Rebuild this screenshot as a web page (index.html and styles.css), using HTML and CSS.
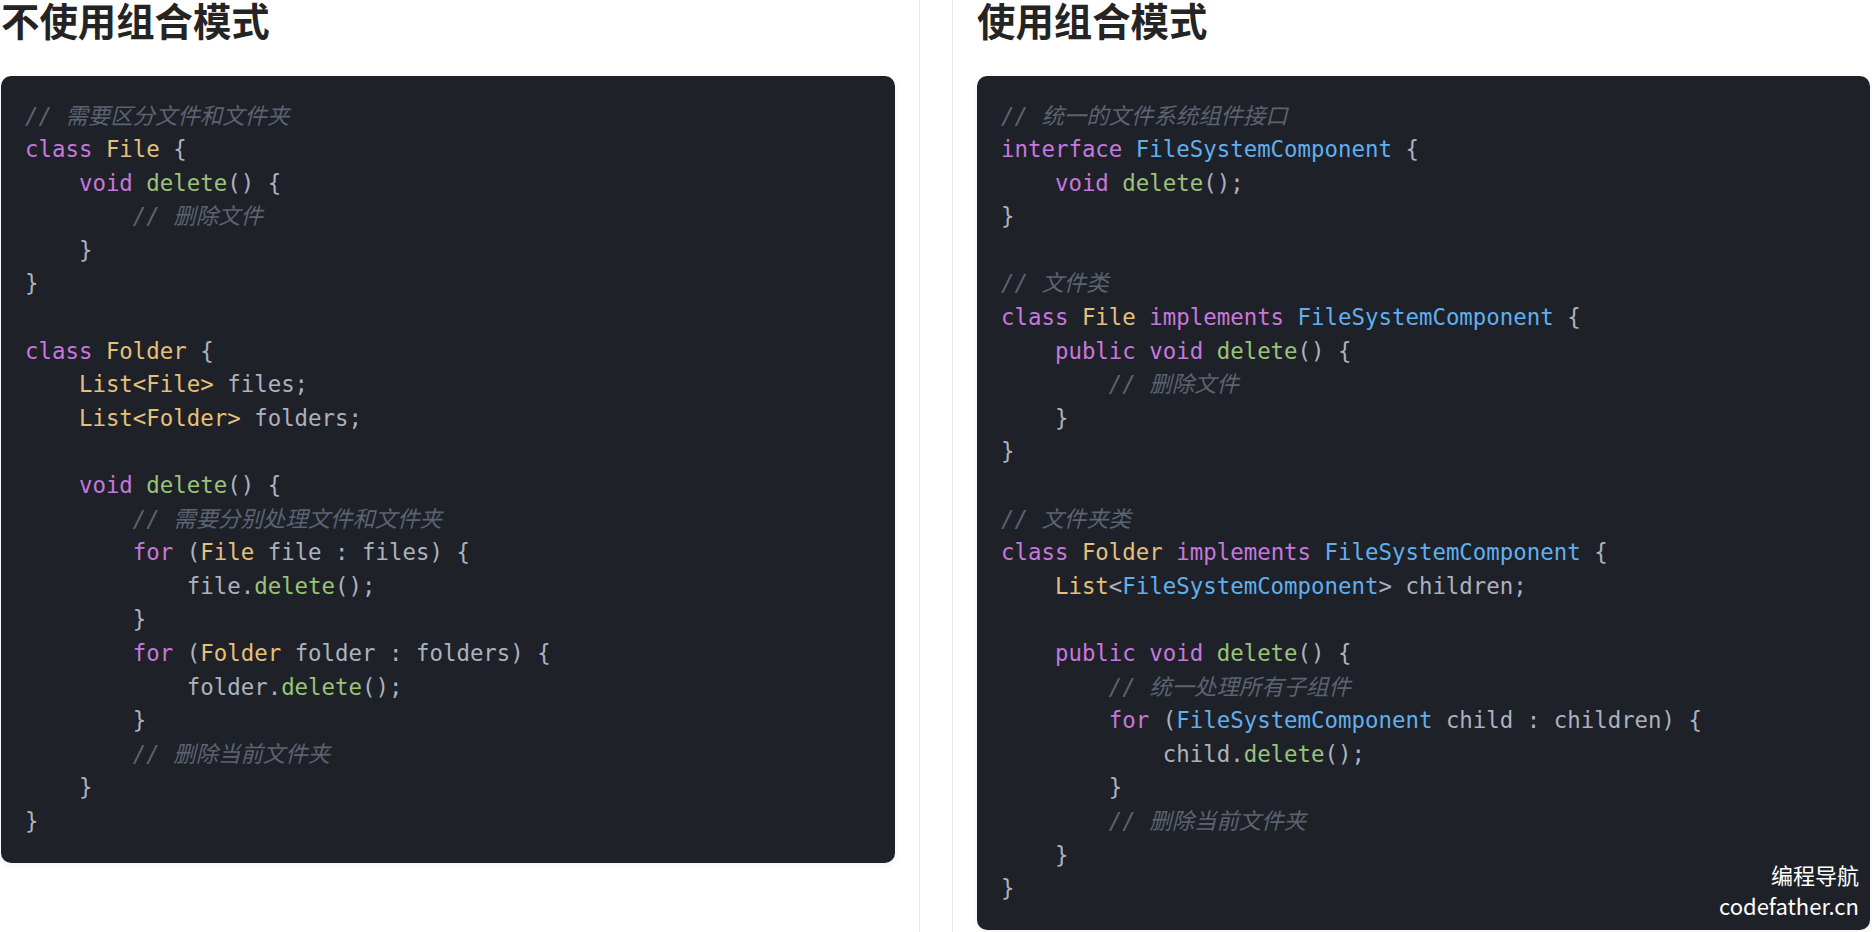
FILE: index.html
```html
<!DOCTYPE html>
<html lang="zh-CN">
<head>
<meta charset="utf-8">
<title>组合模式对比</title>
<link rel="stylesheet" href="styles.css">
</head>
<body>
<div class="page">
  <section class="col col-left">
    <h2 class="title">不使用组合模式</h2>
    <pre class="code"><span class="c">// 需要区分文件和文件夹</span>
<span class="k">class</span> <span class="t">File</span> {
    <span class="k">void</span> <span class="f">delete</span>() {
        <span class="c">// 删除文件</span>
    }
}

<span class="k">class</span> <span class="t">Folder</span> {
    <span class="t">List&lt;File&gt;</span> files;
    <span class="t">List&lt;Folder&gt;</span> folders;

    <span class="k">void</span> <span class="f">delete</span>() {
        <span class="c">// 需要分别处理文件和文件夹</span>
        <span class="k">for</span> (<span class="t">File</span> file : files) {
            file.<span class="f">delete</span>();
        }
        <span class="k">for</span> (<span class="t">Folder</span> folder : folders) {
            folder.<span class="f">delete</span>();
        }
        <span class="c">// 删除当前文件夹</span>
    }
}</pre>
  </section>
  <section class="col col-right">
    <h2 class="title">使用组合模式</h2>
    <div class="code-wrap">
    <pre class="code"><span class="c">// 统一的文件系统组件接口</span>
<span class="k">interface</span> <span class="i">FileSystemComponent</span> {
    <span class="k">void</span> <span class="f">delete</span>();
}

<span class="c">// 文件类</span>
<span class="k">class</span> <span class="t">File</span> <span class="k">implements</span> <span class="i">FileSystemComponent</span> {
    <span class="k">public</span> <span class="k">void</span> <span class="f">delete</span>() {
        <span class="c">// 删除文件</span>
    }
}

<span class="c">// 文件夹类</span>
<span class="k">class</span> <span class="t">Folder</span> <span class="k">implements</span> <span class="i">FileSystemComponent</span> {
    <span class="t">List</span>&lt;<span class="i">FileSystemComponent</span>&gt; children;

    <span class="k">public</span> <span class="k">void</span> <span class="f">delete</span>() {
        <span class="c">// 统一处理所有子组件</span>
        <span class="k">for</span> (<span class="i">FileSystemComponent</span> child : children) {
            child.<span class="f">delete</span>();
        }
        <span class="c">// 删除当前文件夹</span>
    }
}</pre>
    <div class="watermark"><span>编程导航</span><span>codefather.cn</span></div>
    </div>
  </section>
</div>
</body>
</html>
```

FILE: styles.css
```css
html, body {
  margin: 0;
  padding: 0;
  background: #ffffff;
}

body {
  font-family: "Noto Sans CJK SC", "Noto Sans", sans-serif;
  overflow: hidden;
}

.page {
  display: flex;
  align-items: stretch;
  gap: 32px;
  min-height: 932px;
}

.col-left {
  flex: 0 0 auto;
  width: 894px;
  padding-left: 1px;
  padding-right: 24px;
  border-right: 1px solid #e8e8e8;
}

.col-right {
  flex: 1 1 auto;
  min-width: 0;
  border-left: 1px solid #e8e8e8;
  padding-left: 24px;
  padding-right: 2px;
}

.title {
  margin: 0 0 37.5px 0;
  font-size: 38.4px;
  line-height: 38px;
  font-weight: 700;
  color: #242424;
}

.code-wrap {
  position: relative;
}

.code {
  margin: 0;
  padding: 24px;
  background: #1e2128;
  border-radius: 10px;
  color: #abb2bf;
  font-family: "DejaVu Sans Mono", "Noto Sans CJK SC", monospace;
  font-size: 22.4px;
  line-height: 33.6px;
  white-space: pre;
  overflow: hidden;
  box-shadow: 0 2px 6px rgba(0, 0, 0, 0.06);
}

.k { color: #c678dd; }
.t { color: #e5c07b; }
.f { color: #98c379; }
.i { color: #61afef; }
.c { color: #5c6370; font-style: italic; }

.watermark {
  position: absolute;
  right: 11px;
  bottom: 9px;
  display: flex;
  flex-direction: column;
  align-items: flex-end;
  color: #ffffff;
  font-family: "Noto Sans CJK SC", sans-serif;
  font-size: 22px;
  line-height: 31px;
}
```
